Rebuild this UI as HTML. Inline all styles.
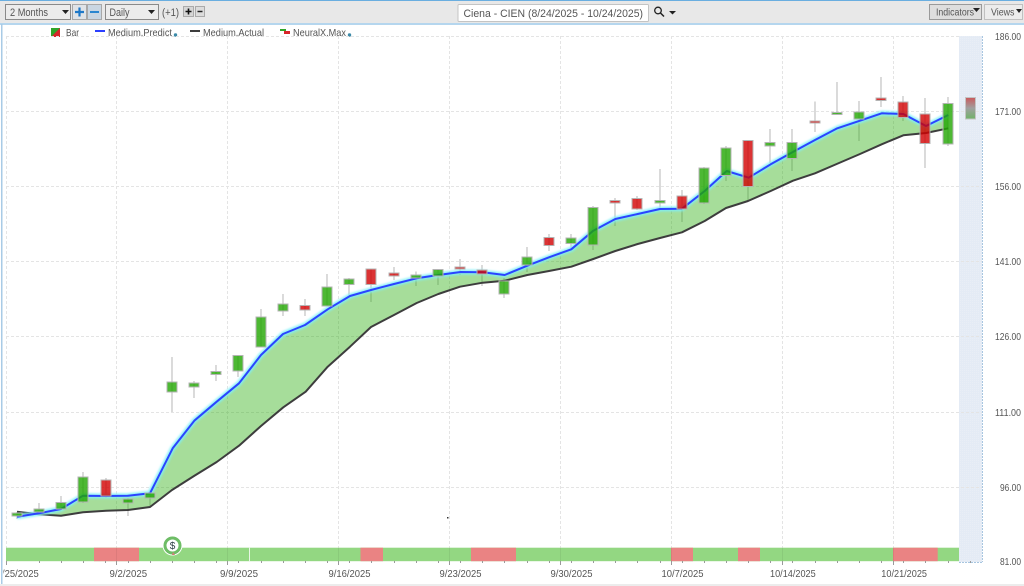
<!DOCTYPE html>
<html><head><meta charset="utf-8">
<style>
html,body{margin:0;padding:0;background:#fff}
svg{display:block;font-family:"Liberation Sans",sans-serif}
</style></head>
<body>
<svg width="1024" height="586" viewBox="0 0 1024 586" xmlns="http://www.w3.org/2000/svg">
<defs>
<pattern id="h" width="2" height="2" patternUnits="userSpaceOnUse"><rect width="2" height="2" fill="#e4ebf5"/><rect width="1" height="1" fill="#e9eef6"/></pattern>
<linearGradient id="gh" x1="0" y1="0" x2="0" y2="1"><stop offset="0" stop-color="#c9595c"/><stop offset=".5" stop-color="#a0a0a0"/><stop offset="1" stop-color="#6fb267"/></linearGradient>
<filter id="bl" x="-5%" y="-5%" width="110%" height="110%"><feGaussianBlur stdDeviation="1"/></filter>
</defs>
<rect width="1024" height="586" fill="#fff"/>
<!-- toolbar -->
<rect x="0" y="0" width="1024" height="24" fill="#e8e8e8"/>
<rect x="0" y="0" width="1024" height="1" fill="#6aaee0"/>
<rect x="0" y="23" width="1024" height="2" fill="#b5d6ee"/>
<rect x="1" y="24" width="1.5" height="560" fill="#a9cbe6"/>
<rect x="0" y="584" width="1024" height="2" fill="#ececec"/>
<rect x="5.5" y="4.5" width="65" height="15" fill="#ececec" stroke="#8a8a8a"/>
<text x="10" y="16" font-size="11" fill="#555" textLength="38" lengthAdjust="spacingAndGlyphs">2 Months</text>
<path d="M62 10h7l-3.500 4z" fill="#222"/>
<rect x="72.500" y="4.500" width="14" height="15" fill="#dfe3e7" stroke="#a8a8a8"/>
<path d="M79.500 7.500v9M75 12h9" stroke="#1e78c8" stroke-width="2.200"/>
<rect x="87.500" y="4.500" width="14" height="15" fill="#c9d6e2" stroke="#a8a8a8"/>
<path d="M90 12h9" stroke="#2a86cf" stroke-width="2"/>
<rect x="105.500" y="4.500" width="53" height="15" fill="#ececec" stroke="#8a8a8a"/>
<text x="109.500" y="16" font-size="11" fill="#555" textLength="20" lengthAdjust="spacingAndGlyphs">Daily</text>
<path d="M148 10h7l-3.500 4z" fill="#222"/>
<text x="162" y="16" font-size="11" fill="#555" textLength="17" lengthAdjust="spacingAndGlyphs">(+1)</text>
<rect x="183.500" y="6.500" width="10" height="10" fill="#d6d6d6" stroke="#aaa"/>
<path d="M188.500 8.500v6M185.500 11.500h6" stroke="#111" stroke-width="1.600"/>
<rect x="195.500" y="6.500" width="9" height="10" fill="#dcdcdc" stroke="#aaa"/>
<path d="M197.500 11.500h5" stroke="#222" stroke-width="1.500"/>
<rect x="458" y="4.500" width="190.500" height="17" rx="1" fill="#fff" stroke="#c4c4c4"/>
<text x="463.500" y="17" font-size="11" fill="#555" textLength="179.500" lengthAdjust="spacingAndGlyphs">Ciena - CIEN (8/24/2025 - 10/24/2025)</text>
<circle cx="658" cy="10.500" r="3.300" fill="none" stroke="#222" stroke-width="1.300"/>
<path d="M660.500 13l3.500 3.500" stroke="#222" stroke-width="1.500"/>
<path d="M669 11h7l-3.500 3.500z" fill="#222"/>
<rect x="929.500" y="4.500" width="52" height="15" fill="#dedede" stroke="#9a9a9a"/>
<text x="936" y="15.500" font-size="10.500" fill="#555" textLength="38" lengthAdjust="spacingAndGlyphs">Indicators</text>
<path d="M973 8h7l-3.500 4z" fill="#222"/>
<rect x="984.500" y="4.500" width="38" height="15" fill="#ececec" stroke="#c0c0c0"/>
<text x="991" y="15.500" font-size="10.500" fill="#555" textLength="23.500" lengthAdjust="spacingAndGlyphs">Views</text>
<path d="M1016 9h6l-3 4z" fill="#222"/>
<!-- legend -->
<rect x="51" y="28" width="9" height="9" fill="#2fa52a"/><path d="M60 28v9h-9z" fill="#d8262b"/>
<text x="66" y="36" font-size="10.500" fill="#555" textLength="13" lengthAdjust="spacingAndGlyphs">Bar</text>
<rect x="95" y="30" width="10" height="2" fill="#2b3fff"/>
<text x="108" y="36" font-size="10.500" fill="#555" textLength="64" lengthAdjust="spacingAndGlyphs">Medium.Predict</text>
<circle cx="175.500" cy="35" r="1.700" fill="#3c8aa8"/>
<rect x="190" y="30" width="10" height="2" fill="#3d3d3d"/>
<text x="203" y="36" font-size="10.500" fill="#555" textLength="61" lengthAdjust="spacingAndGlyphs">Medium.Actual</text>
<path d="M280 29h6v2h-6z" fill="#2fa52a"/><path d="M284 31h6v3h-6z" fill="#d8262b"/>
<text x="293" y="36" font-size="10.500" fill="#555" textLength="53" lengthAdjust="spacingAndGlyphs">NeuralX.Max</text>
<circle cx="349.500" cy="35" r="1.700" fill="#3c8aa8"/>
<!-- shaded right -->
<rect x="959" y="36" width="23" height="526" fill="url(#h)"/>
<path d="M982.500 36v526" stroke="#a8c6e0" stroke-dasharray="2 1"/>
<!-- grid -->
<g stroke="#e4e4e4" stroke-dasharray="3 2" fill="none">
<path d="M6 36.500h953M6 111.500h976M6 186.500h976M6 261.500h976M6 336.500h976M6 412.500h976M6 487.500h976"/>
<path d="M6.500 36v526M116.500 36v526M227.500 36v526M338.500 36v526M449.500 36v526M560.500 36v526M671.500 36v526M782.500 36v526M893.500 36v526"/>
</g>
<!-- wicks -->
<path stroke="#bdbdbd" stroke-width="1.100" fill="none" d="M17 512V519M39 503V513M61 496V510M83 472V503M106 478V498M128 498V516M150 490V506M172 357V412M194 381V398M216 365V381M238 355V377M261 309V347M283 294V316M305 299V316M327 274V306M349 278V295M371 269V302M394 267V280M416 271.500V286M438 269V285M460 259V275M482 265V286M504 278V298M527 247V272M549 234V251M571 234V250M593 206V250M615 198V226M637 196V210M660 169V209M682 190V222M704 167V204M726 146V181M748 140V200M770 129V163M792 129V171M815 101.500V132M837 82V115M859 101V141M881 77V107M903 96V121M925 98V168M948 97V146"/>
<!-- area -->
<path fill="rgba(43,174,14,.42)" d="M17 516.700L39 513.300L61 509L83 495.700L106 496L128 495.700L150 493.300L172.700 448.300L194.300 420.700L216.700 401.700L239 383.300L261 355L283 334L305 325L327.700 309.300L350 296L371 290L394 284L416.700 278.300L438.300 275L460.700 272L482.700 272.300L504.700 275L527.300 265.700L549 257.300L571.300 249.300L593.300 230.700L615.300 219L637.700 214L660 209L682 208.700L704.700 191L726.700 171L748.700 177.700L770.700 164.300L793.300 151.700L815 140L837.300 128.300L860 120.700L881.700 113.300L903.300 114L926 126L948.300 115L948.300 128.300L926 133L903.300 135.300L881.700 144.300L860 154L836.700 164L815 173.300L793 180.700L770.700 191L748 201L726 208L704.700 221L682 232.300L660 238L637.700 244L615.300 251L593.300 259L571.300 266.700L549 271L527.300 275L504.700 280.700L482.700 282.700L460 286.700L438.300 294L416.700 303L394 315L371 327L350 346.700L327.700 366.700L305.700 391.700L283.300 407.300L261 426L239 445.700L216.700 462L194 476L172 490L150 507L128 510L106 510.700L83 512.300L61 515.700L39 514.300L17 511.700Z"/>
<!-- lines -->
<path fill="none" stroke="#3d3d3d" stroke-width="2" stroke-linejoin="round" d="M17 511.700L39 514.300L61 515.700L83 512.300L106 510.700L128 510L150 507L172 490L194 476L216.700 462L239 445.700L261 426L283.300 407.300L305.700 391.700L327.700 366.700L350 346.700L371 327L394 315L416.700 303L438.300 294L460 286.700L482.700 282.700L504.700 280.700L527.300 275L549 271L571.300 266.700L593.300 259L615.300 251L637.700 244L660 238L682 232.300L704.700 221L726 208L748 201L770.700 191L793 180.700L815 173.300L836.700 164L860 154L881.700 144.300L903.300 135.300L926 133L948.300 128.300"/>
<path filter="url(#bl)" fill="none" stroke="#7ff0f7" stroke-opacity=".9" stroke-width="5" stroke-linejoin="round" d="M17 516.700L39 513.300L61 509L83 495.700L106 496L128 495.700L150 493.300L172.700 448.300L194.300 420.700L216.700 401.700L239 383.300L261 355L283 334L305 325L327.700 309.300L350 296L371 290L394 284L416.700 278.300L438.300 275L460.700 272L482.700 272.300L504.700 275L527.300 265.700L549 257.300L571.300 249.300L593.300 230.700L615.300 219L637.700 214L660 209L682 208.700L704.700 191L726.700 171L748.700 177.700L770.700 164.300L793.300 151.700L815 140L837.300 128.300L860 120.700L881.700 113.300L903.300 114L926 126L948.300 115"/>
<path fill="none" stroke="#2b44ff" stroke-width="2" stroke-linejoin="round" d="M17 516.700L39 513.300L61 509L83 495.700L106 496L128 495.700L150 493.300L172.700 448.300L194.300 420.700L216.700 401.700L239 383.300L261 355L283 334L305 325L327.700 309.300L350 296L371 290L394 284L416.700 278.300L438.300 275L460.700 272L482.700 272.300L504.700 275L527.300 265.700L549 257.300L571.300 249.300L593.300 230.700L615.300 219L637.700 214L660 209L682 208.700L704.700 191L726.700 171L748.700 177.700L770.700 164.300L793.300 151.700L815 140L837.300 128.300L860 120.700L881.700 113.300L903.300 114L926 126L948.300 115"/>
<!-- bodies -->
<g stroke="#b4b4b4" stroke-width="1" fill="#20a600" fill-opacity=".8">
<rect x="12" y="513" width="10" height="3"/><rect x="34" y="509" width="10" height="3"/><rect x="56" y="502.500" width="10" height="6.500"/><rect x="78" y="477" width="10" height="25"/>
<rect x="123" y="499" width="10" height="4"/><rect x="145" y="493" width="10" height="5"/><rect x="167" y="382" width="10" height="10"/><rect x="189" y="383" width="10" height="4"/><rect x="211" y="371.500" width="10" height="3"/><rect x="233" y="355.500" width="10" height="15.500"/><rect x="256" y="317" width="10" height="30"/><rect x="278" y="304" width="10" height="7"/><rect x="322" y="287" width="10" height="19"/><rect x="344" y="279" width="10" height="5.500"/>
<rect x="411" y="275" width="10" height="3"/><rect x="433" y="269.500" width="10" height="6.500"/><rect x="499" y="281" width="10" height="13"/><rect x="522" y="257" width="10" height="8"/><rect x="566" y="238" width="10" height="5.500"/><rect x="588" y="207.500" width="10" height="37.500"/><rect x="655" y="200.500" width="10" height="2.500"/>
<rect x="699" y="168" width="10" height="35"/><rect x="721" y="148" width="10" height="27.500"/><rect x="765" y="142.500" width="10" height="3.500"/><rect x="787" y="142.500" width="10" height="16"/><rect x="832" y="112.500" width="10" height="2"/><rect x="854" y="112" width="10" height="7"/><rect x="943" y="103.500" width="10" height="40.500"/>
</g>
<g stroke="#b4b4b4" stroke-width="1" fill="#d20001" fill-opacity=".8">
<rect x="101" y="480" width="10" height="16"/><rect x="300" y="305.500" width="10" height="4.500"/><rect x="366" y="269" width="10" height="15.500"/><rect x="389" y="273" width="10" height="3"/><rect x="455" y="267" width="10" height="2"/><rect x="477" y="270" width="10" height="4"/><rect x="544" y="237.500" width="10" height="8"/><rect x="610" y="200.500" width="10" height="2.500"/><rect x="632" y="198.500" width="10" height="10.500"/><rect x="677" y="196" width="10" height="13"/><rect x="743" y="140.500" width="10" height="46"/><rect x="810" y="121" width="10" height="2"/><rect x="876" y="98" width="10" height="2.500"/><rect x="898" y="102" width="10" height="15.500"/><rect x="920" y="114" width="10" height="29.500"/>
</g>
<rect x="965.500" y="97.500" width="10" height="21.500" fill="url(#gh)" stroke="#c4c4c4"/>
<rect x="447" y="517" width="1.500" height="1.500" fill="#333"/>
<!-- strip -->
<rect x="6" y="547.700" width="953" height="13.500" fill="#93d782"/>
<g fill="#ea8383"><rect x="94" y="547.700" width="45" height="13.500"/><rect x="360.500" y="547.700" width="22.500" height="13.500"/><rect x="471" y="547.700" width="45" height="13.500"/><rect x="671" y="547.700" width="22" height="13.500"/><rect x="738" y="547.700" width="22" height="13.500"/><rect x="893" y="547.700" width="44.700" height="13.500"/></g>
<rect x="249" y="547.700" width="1" height="13.500" fill="#e8f6e4"/>
<path d="M116.500 548v13M227.500 548v13M338.500 548v13M449.500 548v13M560.500 548v13M671.500 548v13M782.500 548v13M893.500 548v13" stroke="#000" stroke-opacity=".06"/>
<!-- badge -->
<circle cx="172.500" cy="545.500" r="10" fill="#fff"/>
<circle cx="172.500" cy="545.500" r="7.500" fill="#fff" stroke="#6ebd66" stroke-width="3"/>
<text x="172.500" y="549" font-size="10" fill="#2f3f45" text-anchor="middle">$</text>
<path d="M173 552l2 3h-3z" fill="#d97a7a"/>
<!-- ticks -->
<path stroke="#9a9a9a" d="M6.500 561v4M39.500 561v2M61.500 561v2M83.500 561v2M105.500 561v2M116.500 561v4M128.500 561v2M150.500 561v2M172.500 561v2M194.500 561v2M216.500 561v2M227.500 561v4M238.500 561v2M261.500 561v2M283.500 561v2M305.500 561v2M327.500 561v2M338.500 561v4M349.500 561v2M371.500 561v2M394.500 561v2M416.500 561v2M438.500 561v2M449.500 561v4M460.500 561v2M482.500 561v2M504.500 561v2M527.500 561v2M549.500 561v2M560.500 561v4M571.500 561v2M593.500 561v2M615.500 561v2M637.500 561v2M660.500 561v2M671.500 561v4M682.500 561v2M704.500 561v2M726.500 561v2M748.500 561v2M770.500 561v2M782.500 561v4M792.500 561v2M815.500 561v2M837.500 561v2M859.500 561v2M881.500 561v2M893.500 561v4M903.500 561v2M925.500 561v2M948.500 561v2M970.500 561v2"/>
<path stroke="#a8c6e0" stroke-dasharray="2 1" d="M959 562.500h24"/>
<!-- x labels -->
<g font-size="10.500" fill="#555">
<text x="109.500" y="577" textLength="37.600" lengthAdjust="spacingAndGlyphs">9/2/2025</text>
<text x="220" y="577" textLength="38" lengthAdjust="spacingAndGlyphs">9/9/2025</text>
<text x="328.500" y="577" textLength="42" lengthAdjust="spacingAndGlyphs">9/16/2025</text>
<text x="439.500" y="577" textLength="42" lengthAdjust="spacingAndGlyphs">9/23/2025</text>
<text x="550.500" y="577" textLength="42" lengthAdjust="spacingAndGlyphs">9/30/2025</text>
<text x="661.500" y="577" textLength="42" lengthAdjust="spacingAndGlyphs">10/7/2025</text>
<text x="770" y="577" textLength="45.700" lengthAdjust="spacingAndGlyphs">10/14/2025</text>
<text x="881.300" y="577" textLength="45.700" lengthAdjust="spacingAndGlyphs">10/21/2025</text>
<text x="-3.300" y="577" textLength="42" lengthAdjust="spacingAndGlyphs">8/25/2025</text>
</g>
<rect x="0" y="566" width="3.500" height="14" fill="#fff"/>
<rect x="1" y="566" width="1.500" height="14" fill="#a9cbe6"/>
<!-- y labels -->
<g font-size="10.500" fill="#555">
<text x="995" y="40" textLength="26" lengthAdjust="spacingAndGlyphs">186.00</text>
<text x="995" y="115" textLength="26" lengthAdjust="spacingAndGlyphs">171.00</text>
<text x="995" y="190" textLength="26" lengthAdjust="spacingAndGlyphs">156.00</text>
<text x="995" y="265" textLength="26" lengthAdjust="spacingAndGlyphs">141.00</text>
<text x="995" y="340" textLength="26" lengthAdjust="spacingAndGlyphs">126.00</text>
<text x="995" y="416" textLength="26" lengthAdjust="spacingAndGlyphs">111.00</text>
<text x="1000" y="491" textLength="21" lengthAdjust="spacingAndGlyphs">96.00</text>
<text x="1000" y="565" textLength="21" lengthAdjust="spacingAndGlyphs">81.00</text>
</g>
</svg>
</body></html>
